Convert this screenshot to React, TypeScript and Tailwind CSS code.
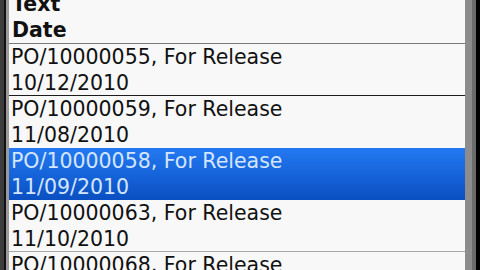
import React from "react";

const rows = [
  { po: "PO/10000055, For Release", date: "10/12/2010", border: "border-b border-[#1c1c1c]" },
  { po: "PO/10000059, For Release", date: "11/08/2010", border: "" },
  { po: "PO/10000058, For Release", date: "11/09/2010", border: "", selected: true },
  { po: "PO/10000063, For Release", date: "11/10/2010", border: "border-b border-[#a8a8a8]" },
  { po: "PO/10000068, For Release", date: "11/11/2010", border: "" },
];

export default function App() {
  return (
    <div
      className="flex w-[480px] h-[270px] overflow-hidden bg-black"
      style={{ fontFamily: '"DejaVu Sans", "Liberation Sans", sans-serif' }}
    >
      <div className="w-[4px] bg-[#3c3c3c]" />
      <div className="w-[2px] bg-[#111111]" />
      <div className="w-[3px] bg-[#9a9a9a]" />
      <div className="flex-1 flex flex-col bg-[#f8f8f8] text-[20.5px] leading-[26px] text-[#111]">
        <div className="h-[44px] shrink-0 overflow-hidden flex flex-col justify-end pl-[3px] font-bold border-b border-[#7a7a7a]">
          <div>Text</div>
          <div>Date</div>
        </div>
        {rows.map((r) => (
          <div
            key={r.po}
            className={`h-[52px] shrink-0 pl-[2px] ${r.border} ${
              r.selected
                ? "bg-gradient-to-b from-[#2479f2] to-[#0a4fc2] text-[#d4e6ff]"
                : ""
            }`}
          >
            <div>{r.po}</div>
            <div>{r.date}</div>
          </div>
        ))}
      </div>
      <div className="w-[7px] bg-[#8c8c8c]" />
      <div className="w-[4px] bg-[#6b6b6b]" />
      <div className="w-[4px] bg-black" />
    </div>
  );
}
